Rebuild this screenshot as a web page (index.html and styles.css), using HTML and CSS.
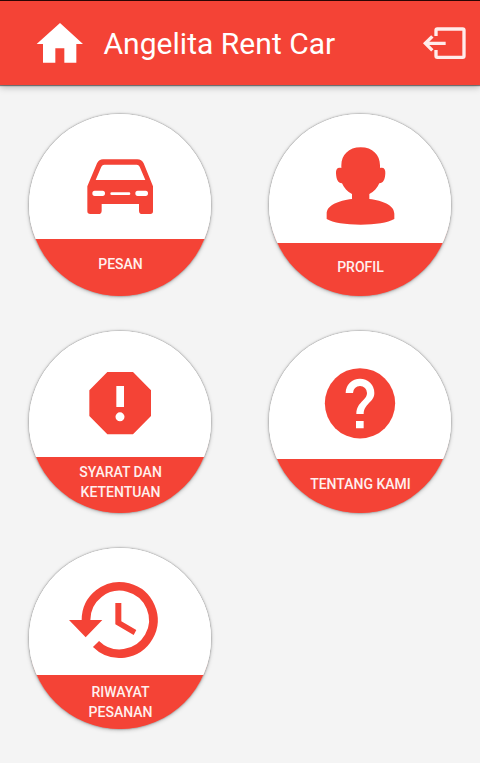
FILE: index.html
```html
<!DOCTYPE html>
<html lang="id">
<head>
<meta charset="utf-8">
<title>Angelita Rent Car</title>
<link rel="stylesheet" href="styles.css">
</head>
<body>
<header class="bar">
  <svg class="home" viewBox="108 66 144 126"><path d="M180 69L249 132H229V188H193V145H166V188H129V132H110Z"/></svg>
  <h1 class="title">Angelita Rent Car</h1>
  <svg class="exit" viewBox="546 78 138 102"><path d="M588 108V91Q588 87 592 87H668Q672 87 672 91V168Q672 172 668 172H592Q588 172 588 168V150M617 130H556M577 109L556 130L577 151"/></svg>
</header>
<main class="menu">
  <a class="item">
    <svg class="icon pesan" viewBox="27 27 546 375">
      <path fill-rule="evenodd" d="M249 163H352Q365 163 371 175L399 244V319Q399 327 391 327H367Q357 327 357 317V297H245V317Q245 327 235 327H211Q202 327 202 319V244L231 175Q237 163 249 163ZM253 179Q247 179 244 185L227 225H376L359 185Q356 179 350 179ZM224 257Q217 257 217 265Q217 273 224 273H248Q255 273 255 265Q255 257 248 257ZM353 257Q346 257 346 265Q346 273 353 273H377Q384 273 384 265Q384 257 377 257ZM275 262Q271 262 271 266Q271 270 275 270H327Q331 270 331 266Q331 262 327 262Z"/>
    </svg>
    <span class="label pesan-label">PESAN</span>
  </a>
  <a class="item">
    <svg class="icon profil" viewBox="27 27 546 387">
      <path d="M302 127C338 127 360 150 360 181V189C371 186 377 192 376 205C375 224 370 235 358 235C352 249 342 260 328 267V282C369 287 403 301 403 326V342C383 353 347 359 302 359C256 359 219 353 200 342V326C200 301 235 287 276 282V267C262 260 252 249 246 235C234 235 229 224 228 205C227 192 233 186 244 189V181C244 150 266 127 302 127Z"/>
    </svg>
    <span class="label profil-label">PROFIL</span>
  </a>
  <a class="item">
    <svg class="icon syarat" viewBox="27 27 546 378">
      <path fill-rule="evenodd" d="M262 150H339L393 205V282L339 337H262L208 282V205ZM289 192V255H312V192ZM300 271A13.5 13.5 0 1 0 300 298A13.5 13.5 0 1 0 300 271Z"/>
    </svg>
    <span class="label syarat-label">SYARAT DAN<br>KETENTUAN</span>
  </a>
  <a class="item">
    <svg class="icon tentang" viewBox="27 27 546 384">
      <circle cx="300" cy="244" r="105.5"/>
      <path class="cutout" d="M257 213A43 43 0 0 1 343 213C343 241 311 245 311 276H289C289 240 321 236 321 213A21 21 0 0 0 279 213ZM288 297H311V319H288Z"/>
    </svg>
    <span class="label tentang-label">TENTANG KAMI</span>
  </a>
  <a class="item short">
    <svg class="icon riwayat" viewBox="27 30 546 381">
      <path class="stroke" d="M198 247A101 101 0 1 1 228 318"/>
      <path d="M147 246H247L197 298ZM286 195H304V250L349 276L341 291L286 259Z"/>
    </svg>
    <span class="label riwayat-label">RIWAYAT<br>PESANAN</span>
  </a>
</main>
</body>
</html>
```
FILE: styles.css
```css
* { box-sizing: border-box; }
body {
  margin: 0;
  min-height: 763px;
  background: #f4f4f4;
  font-family: Roboto, "Liberation Sans", sans-serif;
}
.bar {
  display: flex;
  align-items: center;
  height: 85px;
  padding: 0 12px 1px 36px;
  border-top: 1px solid #2b0503;
  background: #f44336;
  box-shadow: 0 1px 1px rgba(0, 0, 0, .45), 0 2px 7px rgba(0, 0, 0, .28);
}
.home { width: 48px; height: 42px; fill: #fff; }
.title {
  margin: 2px auto 0 19.5px;
  color: #fff;
  font-size: 30px;
  font-weight: 400;
  line-height: 40px;
  letter-spacing: .03px;
  white-space: nowrap;
}
.exit {
  width: 46px;
  height: 34px;
  fill: none;
  stroke: #ffeceb;
  stroke-width: 10;
}
.menu {
  display: grid;
  grid-template-columns: 182px 182px;
  column-gap: 58px;
  row-gap: 35px;
  padding: 29px 29px 0;
}
.item {
  display: flex;
  flex-direction: column;
  height: 182px;
  overflow: hidden;
  border-radius: 50%;
  background: linear-gradient(#fff 60%, #f44336 80%);
  box-shadow: 0 0 2px rgba(0, 0, 0, .5), 0 1px 4px rgba(0, 0, 0, .25);
}
.short { height: 181px; }
.icon { display: block; flex: none; width: 182px; background: #fff; fill: #f44336; }
.cutout { fill: #fff; }
.stroke { fill: none; stroke: #f44336; stroke-width: 26; }
.pesan { height: 125px; }
.profil { height: 129px; }
.syarat { height: 126px; }
.tentang { height: 128px; }
.riwayat { height: 127px; }
.label {
  flex: 1;
  padding-left: 1px;
  background: #f44336;
  color: #fff0ee;
  font-size: 14px;
  font-weight: 500;
  line-height: 20px;
  text-align: center;
}
.pesan-label { padding-top: 15px; }
.profil-label { padding-top: 14px; }
.syarat-label { padding-top: 5px; }
.tentang-label { padding-top: 15px; }
.riwayat-label { padding-top: 8px; line-height: 19.5px; }
```
